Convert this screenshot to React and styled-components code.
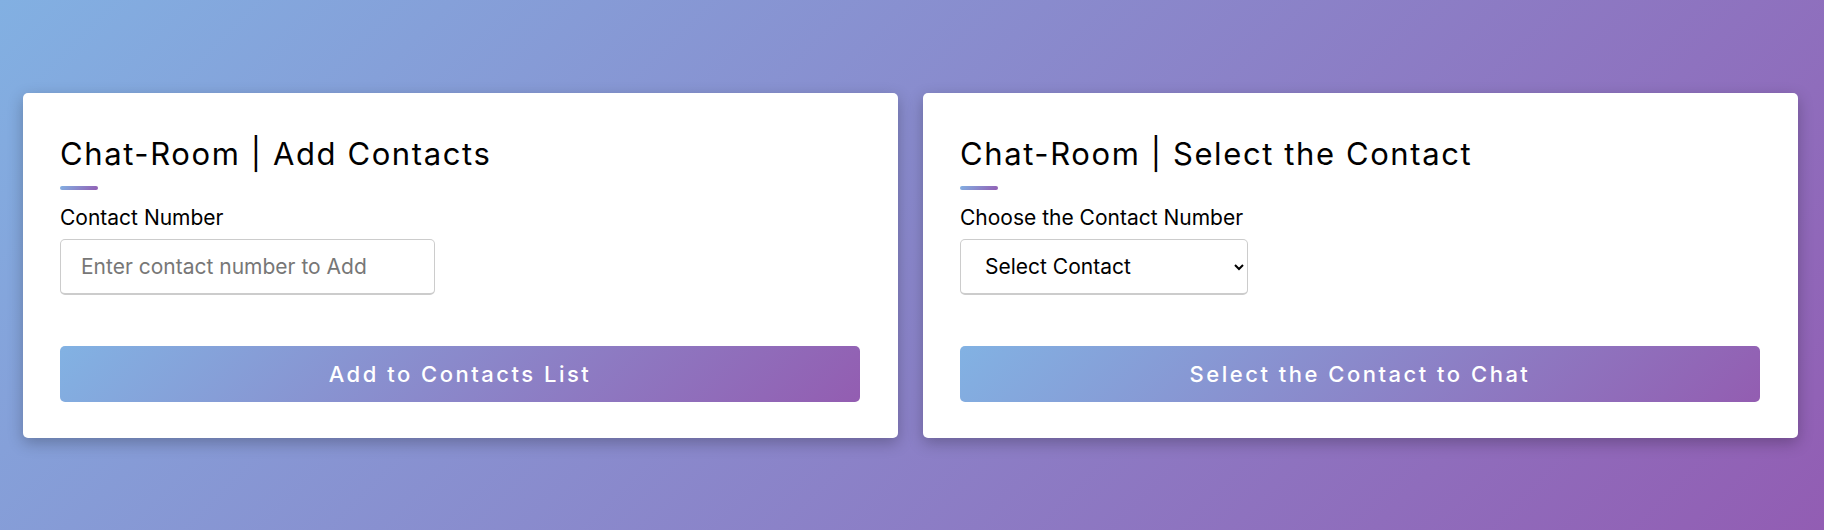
import React from 'react';
import styled, { createGlobalStyle } from 'styled-components';

const GlobalStyle = createGlobalStyle`
  * {
    box-sizing: border-box;
  }

  body {
    margin: 0;
    font-family: Inter, "Noto Sans", sans-serif;
  }
`;

const Page = styled.div`
  min-height: 530px;
  display: flex;
  align-items: center;
  justify-content: space-between;
  padding: 0 26px 0 23px;
  background: linear-gradient(135deg, #82b0e2, #925db3);
`;

const Card = styled.div`
  width: 875px;
  background: #fff;
  border-radius: 5px;
  padding: 39px 38px 36px 37px;
  box-shadow: 0 5px 15px rgba(0, 0, 0, 0.25);
`;

const Title = styled.h2`
  margin: 0;
  font-size: 31px;
  font-weight: 400;
  letter-spacing: 1.6px;
  line-height: 44px;
  color: #000;
`;

const Underline = styled.div`
  width: 38px;
  height: 4px;
  margin: 10px 0 15px;
  border-radius: 2px;
  background: linear-gradient(135deg, #82b0e2, #925db3);
`;

const Label = styled.label`
  display: block;
  font-size: 21px;
  font-weight: 400;
  line-height: 26px;
  color: #000;
  margin-bottom: 8px;
`;

const Field = styled.input`
  display: block;
  width: ${(p) => p.$width}px;
  height: 56px;
  padding: 0 20px;
  border: 1px solid #ccc;
  border-bottom-width: 2px;
  border-radius: 5px;
  font-family: inherit;
  font-size: 21px;
  color: #000;
  outline: none;

  &::placeholder {
    color: #777;
  }
`;

const Picker = styled.select`
  display: block;
  width: ${(p) => p.$width}px;
  height: 56px;
  padding: 0 20px;
  border: 1px solid #ccc;
  border-bottom-width: 2px;
  border-radius: 5px;
  background: #fff;
  font-family: inherit;
  font-size: 21px;
  color: #000;
  outline: none;
`;

const Submit = styled.button`
  display: block;
  width: 100%;
  height: 56px;
  margin-top: 51px;
  border: none;
  border-radius: 5px;
  background: linear-gradient(135deg, #82b2e3, #935db1);
  color: #fff;
  font-family: inherit;
  font-size: 22px;
  font-weight: 500;
  letter-spacing: 2.5px;
  cursor: pointer;
`;

const App = () => {
  return (
    <>
      <GlobalStyle />
      <Page>
        <Card>
          <Title>Chat-Room | Add Contacts</Title>
          <Underline />
          <Label htmlFor="contact">Contact Number</Label>
          <Field id="contact" $width={375} placeholder="Enter contact number to Add" />
          <Submit>Add to Contacts List</Submit>
        </Card>

        <Card>
          <Title>Chat-Room | Select the Contact</Title>
          <Underline />
          <Label htmlFor="pick">Choose the Contact Number</Label>
          <Picker id="pick" $width={288} defaultValue="">
            <option value="">Select Contact</option>
          </Picker>
          <Submit>Select the Contact to Chat</Submit>
        </Card>
      </Page>
    </>
  );
};

export default App;
